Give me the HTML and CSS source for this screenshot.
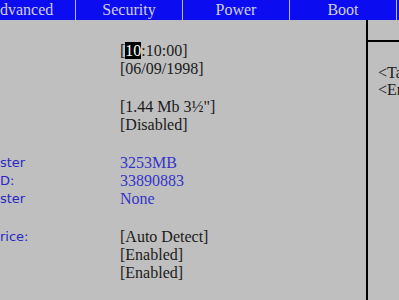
FILE: index.html
```html
<!DOCTYPE html>
<html lang="en">
<head>
  <meta charset="UTF-8">
  <meta name="viewport" content="width=device-width,initial-scale=1.0">
  <title>BIOS Setup - Main</title>
  <link rel="stylesheet" href="styles.css">
</head>
<body>

  <!-- Верхнее меню -->
  <div class="tabs">
    <div class="tab tab-first">dvanced</div>
    <div class="tab">Security</div>
    <div class="tab">Power</div>
    <div class="tab">Boot</div>
    <div class="tab tab-last"></div>
  </div>

  <div class="screen">
    <div class="content">
      <div class="group">
        <div class="row"><span class="label"></span><span class="value">[<span class="sel">10</span>:10:00]</span></div>
        <div class="row"><span class="label"></span><span class="value">[06/09/1998]</span></div>
      </div>
      <div class="group">
        <div class="row"><span class="label"></span><span class="value">[1.44 Mb 3½"]</span></div>
        <div class="row"><span class="label"></span><span class="value">[Disabled]</span></div>
      </div>
      <div class="group">
        <div class="row"><span class="label">ster</span><span class="value info">3253MB</span></div>
        <div class="row"><span class="label">D:</span><span class="value info">33890883</span></div>
        <div class="row"><span class="label">ster</span><span class="value info">None</span></div>
      </div>
      <div class="group">
        <div class="row"><span class="label">rice:</span><span class="value">[Auto Detect]</span></div>
        <div class="row"><span class="label"></span><span class="value">[Enabled]</span></div>
        <div class="row"><span class="label"></span><span class="value">[Enabled]</span></div>
      </div>
    </div>

    <!-- Панель подсказок -->
    <div class="help">
      <div class="help-head"></div>
      <div class="help-body">
        <div>&lt;Ta</div>
        <div>&lt;En</div>
      </div>
    </div>
  </div>

</body>
</html>
```

FILE: styles.css
```css
body {
  margin: 0;
  padding: 0;
  background-color: #bfbfbf;
  color: #1a1a1a;
  font-family: "Liberation Serif", serif;
  font-size: 16px;
  overflow: hidden;
}

.tabs {
  display: flex;
  height: 20px;
  background-color: #0c0cf0;
  color: #cfcfe8;
  white-space: nowrap;
}
.tab {
  flex: 0 0 106px;
  line-height: 20px;
  text-align: center;
  border-right: 1px solid #b8b8e8;
}
.tab-first {
  flex: 0 0 75px;
  text-align: left;
}
.tab-last {
  flex: 1;
  border-right: none;
}

.screen {
  display: flex;
  height: 280px;
}

.content {
  flex: 0 0 366px;
  padding-top: 22px;
}
.group {
  margin-bottom: 20px;
}
.row {
  display: grid;
  grid-template-columns: 120px 1fr;
  height: 18px;
  line-height: 18px;
  white-space: nowrap;
}
.label {
  color: #2828c4;
  font-family: "DejaVu Sans", sans-serif;
  font-size: 13px;
}
.value.info {
  color: #3434c8;
}
.sel {
  background-color: #000;
  color: #fff;
}

.help {
  flex: 1;
  border-left: 2px solid #000;
  white-space: nowrap;
  overflow: hidden;
}
.help-head {
  height: 20px;
  border-bottom: 2px solid #000;
}
.help-body {
  padding: 22px 0 0 10px;
  line-height: 17px;
}
```
